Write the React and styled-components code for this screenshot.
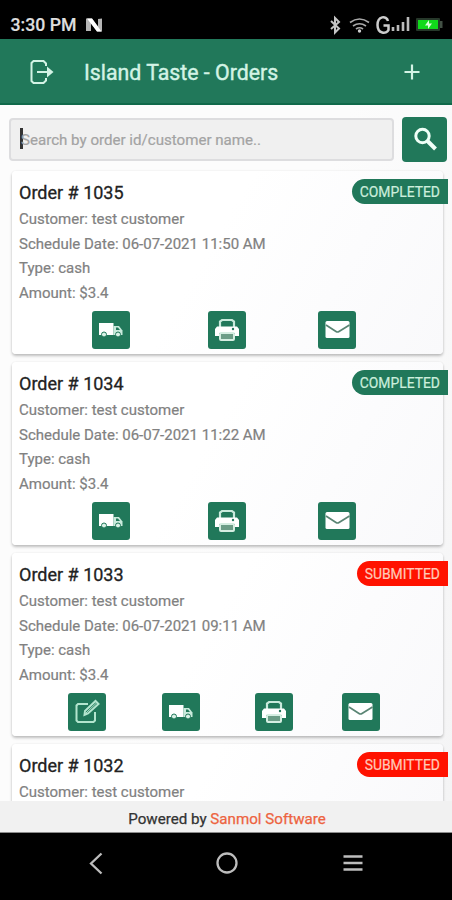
import React from "react";
import styled, { createGlobalStyle } from "styled-components";

const GREEN = "#21785a";

const GlobalStyle = createGlobalStyle`
  * { box-sizing: border-box; }
  body { margin: 0; background: #000; font-family: Roboto, "Noto Sans", sans-serif; }
  button { font: inherit; }
`;

const Screen = styled.div`
  width: 452px;
  height: 900px;
  display: flex;
  flex-direction: column;
  overflow: hidden;
  background: #000;
`;

const StatusBar = styled.div`
  height: 39px;
  flex: none;
  display: flex;
  align-items: flex-end;
  justify-content: space-between;
  padding: 0 7px 4px 10.5px;
  color: #dedede;
`;

const StatusGroup = styled.div`
  display: flex;
  align-items: center;
  height: 20px;
`;

const Clock = styled.span`
  width: 75px;
  font-size: 17.7px;
  line-height: 20px;
  font-weight: 500;
  white-space: nowrap;
  -webkit-text-stroke: 0.2px currentColor;
`;

const AppBar = styled.header`
  height: 66px;
  flex: none;
  display: flex;
  align-items: center;
  padding: 2px 32px 0 28px;
  background: ${GREEN};
  border-bottom: 2px solid #10694a;
  color: #d3f3e5;
`;

const AppTitle = styled.h1`
  flex: 1;
  margin: 2px 0 0 28px;
  font-size: 21.3px;
  line-height: 28px;
  font-weight: 400;
  -webkit-text-stroke: 0.4px currentColor;
`;

const Content = styled.main`
  flex: 1;
  min-height: 0;
  overflow: hidden;
  background: linear-gradient(110deg, #fcfcfc 50%, #f4f4f5);
`;

const SearchRow = styled.div`
  display: flex;
  align-items: center;
  gap: 8px;
  padding: 11.5px 5px 9.5px 9px;
`;

const SearchField = styled.div`
  flex: 1;
  height: 43px;
  display: flex;
  align-items: center;
  padding: 1px 0 0 10px;
  background: #f0f0f0;
  border: 2px solid #dddddf;
  border-radius: 4px;
  color: #a3a3a3;
  font-size: 15.1px;
  -webkit-text-stroke: 0.2px currentColor;
`;

const Caret = styled.span`
  width: 3px;
  height: 21px;
  margin: -3px -2px 0 -1px;
  background: #333;
`;

const SearchButton = styled.button`
  width: 45px;
  height: 45px;
  display: grid;
  place-items: center;
  padding: 0;
  border: 0;
  border-radius: 4px;
  background: ${GREEN};
`;

const OrderList = styled.div`
  display: flex;
  flex-direction: column;
  gap: 8px;
  padding: 0 9.5px 0 12px;
`;

const Card = styled.article`
  position: relative;
  height: ${(p) => (p.$partial ? 60 : 183)}px;
  flex: none;
  padding: 10px 7px 0;
  border-radius: 4px;
  background: linear-gradient(120deg, #fff 45%, #f9f9fb);
  box-shadow: 0 2px 3px rgba(0, 0, 0, 0.24), 0 0 2px rgba(0, 0, 0, 0.08);
`;

const OrderTitle = styled.h2`
  margin: 0 0 2px;
  font-size: 18px;
  line-height: 24px;
  font-weight: 400;
  color: #222;
  -webkit-text-stroke: 0.3px currentColor;
`;

const Detail = styled.p`
  margin: 0;
  font-size: 15px;
  line-height: 24.5px;
  color: #818181;
  -webkit-text-stroke: 0.2px currentColor;
`;

const Badge = styled.span`
  position: absolute;
  top: 7.5px;
  right: -5px;
  width: ${(p) => (p.$submitted ? 90.5 : 95.5)}px;
  height: 25px;
  padding-right: 7.5px;
  border-radius: 13px 0 0 13px;
  background: ${(p) => (p.$submitted ? "#ff1200" : GREEN)};
  color: ${(p) => (p.$submitted ? "#ffc9b8" : "#cdeedd")};
  font-size: 13.9px;
  line-height: 27px;
  text-align: right;
  -webkit-text-stroke: 0.2px currentColor;
`;

const Actions = styled.div`
  display: grid;
  grid-template-columns: ${(p) => (p.$editable ? "94px 93px 87px 38px" : "116px 110.5px 38px")};
  padding-left: ${(p) => (p.$editable ? 48.5 : 72.5)}px;
  margin-top: 5.5px;
`;

const ActionButton = styled.button`
  width: 38px;
  height: 38px;
  display: grid;
  place-items: center;
  padding: 0;
  border: 0;
  border-radius: 3px;
  background: ${GREEN};
`;

const Footer = styled.footer`
  height: 32px;
  flex: none;
  background: #f1f1f1;
  border-bottom: 1px solid #8c8c8c;
  color: #333;
  font-size: 15.15px;
  line-height: 36px;
  text-align: center;
  padding-left: 2px;
  -webkit-text-stroke: 0.25px currentColor;
`;

const Brand = styled.span`
  color: #ed6340;
`;

const NavBar = styled.nav`
  height: 67px;
  flex: none;
  display: grid;
  grid-template-columns: 131px 126px 24px;
  align-items: center;
  padding: 0 0 7px 84px;
`;

const Nfc = () => (
  <svg width="17" height="14" viewBox="0 0 17 14">
    <path d="M0 .500h6l6 8V1l4-.500v13h-5L5 5v8H0z" fill="#b5b5b5" />
    <path d="M1 .500h5l9.500 13h-4.500z" fill="#fff" />
  </svg>
);

const StatusGlyphs = () => (
  <svg width="118" height="20" viewBox="0 0 118 20" fill="none">
    <path d="M4 6l8 7.500-4 4V3L12 7l-8 7" stroke="#c4c4c4" strokeWidth="2" />
    <g stroke="#aaa" strokeWidth="1.7">
      <path d="M23 7.500q9.500-7 19 0M26 11q6.500-4.500 13 0M29 14q3.500-2.500 7 0" />
    </g>
    <circle cx="32.500" cy="16" r="1.700" fill="#ccc" />
    <path d="M61 6C59.500 0 50.500 1 50.500 10s9 9.500 11 5V10.500H56.500" stroke="#ccc" strokeWidth="2.500" />
    <path d="M66 12v4M71 10v6M76 7v9M81 2v14" stroke="#bbb" strokeWidth="2.600" />
    <rect x="89" y="3" width="24" height="13" rx="1" fill="#26382a" />
    <path d="M113 6h2.500v7H113z" fill="#425044" />
    <rect x="91" y="5" width="20" height="9" fill="#11d91b" />
    <path d="M102 5l-4 5.500h3v3.500l4-5.500h-3z" fill="#d9ffda" />
  </svg>
);

const ExitIcon = () => (
  <svg width="28" height="28" viewBox="0 0 28 28" fill="none" stroke="currentColor" strokeWidth="2">
    <path d="M18 8V5.500L15.500 3H5.500L3.500 5v18l2 2h10l2.500-2.500V20" />
    <path d="M9 14h14" />
    <path d="M19 8.500l6.500 5.500-6.500 5.500z" fill="currentColor" stroke="none" />
  </svg>
);

const PlusIcon = () => (
  <svg width="16" height="16" viewBox="0 0 16 16">
    <path d="M8 .500v15M.500 8h15" stroke="currentColor" strokeWidth="2.200" />
  </svg>
);

const SearchIcon = () => (
  <svg width="24" height="24" viewBox="0 0 24 24" fill="none" stroke="#effff7">
    <circle cx="9.500" cy="9" r="6.700" strokeWidth="3" />
    <path d="M14.500 14l8 8" strokeWidth="4" />
  </svg>
);

const TruckIcon = () => (
  <svg width="26" height="20" viewBox="0 0 26 20">
    <path d="M1 3h14.500v12H1z" fill="#fff" />
    <path d="M15.500 6H21l3.500 4.500V15h-9z" fill="#c9eadc" />
    <path d="M18 7.500h2l2 2.500h-4z" fill={GREEN} />
    <circle cx="6" cy="14.500" r="2.500" fill="#d9f1e6" stroke={GREEN} />
    <circle cx="20" cy="14.500" r="2.500" fill="#d9f1e6" stroke={GREEN} />
  </svg>
);

const PrintIcon = () => (
  <svg width="24" height="24" viewBox="0 0 24 24">
    <path d="M5 9V3.500L7 2h10l2 1.500V9" fill="none" stroke="#c9eadc" strokeWidth="2.200" />
    <path d="M0 11l2-2.500h20l2 2.500v7h-4v-3H4v3H0z" fill="#fff" />
    <circle cx="18" cy="11" r="1.200" fill={GREEN} />
    <rect x="5" y="15" width="14" height="7" rx="1" fill="#6c9d87" stroke="#d5eee2" strokeWidth="2" />
  </svg>
);

const MailIcon = () => (
  <svg width="25" height="19" viewBox="0 0 25 19">
    <rect x=".5" y="1" width="24" height="17" rx="1.500" fill="#fff" />
    <path d="M1 5l10 6.500q1.500 1 3 0L24.500 5" fill="none" stroke="#5a8574" strokeWidth="1.700" />
  </svg>
);

const EditIcon = () => (
  <svg width="26" height="26" viewBox="0 0 26 26" fill="none" stroke="#b3e5ce" strokeWidth="2">
    <path d="M14 5H4L2.500 6.500v15L4 23h15.500l1.500-1.500V13" />
    <path d="M11 12L21.500 2l3 3L14 14.500 10.500 16z" />
    <path d="M12 14L22.500 4" strokeWidth="1" />
  </svg>
);

const BackIcon = () => (
  <svg width="24" height="24" viewBox="0 0 24 24" fill="none">
    <path d="M17.500 2.500L7 12.500l10.500 10" stroke="#bdbdbd" strokeWidth="2.300" />
  </svg>
);

const HomeIcon = () => (
  <svg width="24" height="24" viewBox="0 0 24 24" fill="none">
    <circle cx="12" cy="12" r="9.500" stroke="#bdbdbd" strokeWidth="2.300" />
  </svg>
);

const MenuIcon = () => (
  <svg width="24" height="20" viewBox="0 0 24 20">
    <path d="M2.500 3.500h19M2.500 10h19M2.500 16.500h19" stroke="#bdbdbd" strokeWidth="2.700" />
  </svg>
);

const orders = [
  { id: 1035, time: "11:50 AM", status: "COMPLETED" },
  { id: 1034, time: "11:22 AM", status: "COMPLETED" },
  { id: 1033, time: "09:11 AM", status: "SUBMITTED" },
  { id: 1032, status: "SUBMITTED", partial: true },
];

function OrderBody({ time, submitted }) {
  return (
    <>
      <Detail>Schedule Date: 06-07-2021 {time}</Detail>
      <Detail>Type: cash</Detail>
      <Detail>Amount: $3.4</Detail>
      <Actions $editable={submitted}>
        {submitted && <ActionButton aria-label="Edit"><EditIcon /></ActionButton>}
        <ActionButton aria-label="Deliver"><TruckIcon /></ActionButton>
        <ActionButton aria-label="Print"><PrintIcon /></ActionButton>
        <ActionButton aria-label="Email"><MailIcon /></ActionButton>
      </Actions>
    </>
  );
}

function Order({ id, time, status, partial }) {
  const submitted = status === "SUBMITTED";
  return (
    <Card $partial={partial}>
      <Badge $submitted={submitted}>{status}</Badge>
      <OrderTitle>Order # {id}</OrderTitle>
      <Detail>Customer: test customer</Detail>
      {!partial && <OrderBody time={time} submitted={submitted} />}
    </Card>
  );
}

export default function App() {
  return (
    <Screen>
      <GlobalStyle />
      <StatusBar>
        <StatusGroup>
          <Clock>3:30 PM</Clock>
          <Nfc />
        </StatusGroup>
        <StatusGroup><StatusGlyphs /></StatusGroup>
      </StatusBar>
      <AppBar>
        <ExitIcon />
        <AppTitle>Island Taste - Orders</AppTitle>
        <PlusIcon />
      </AppBar>
      <Content>
        <SearchRow>
          <SearchField><Caret />Search by order id/customer name..</SearchField>
          <SearchButton aria-label="Search"><SearchIcon /></SearchButton>
        </SearchRow>
        <OrderList>
          {orders.map((o) => <Order key={o.id} {...o} />)}
        </OrderList>
      </Content>
      <Footer>Powered by <Brand>Sanmol Software</Brand></Footer>
      <NavBar>
        <BackIcon />
        <HomeIcon />
        <MenuIcon />
      </NavBar>
    </Screen>
  );
}
